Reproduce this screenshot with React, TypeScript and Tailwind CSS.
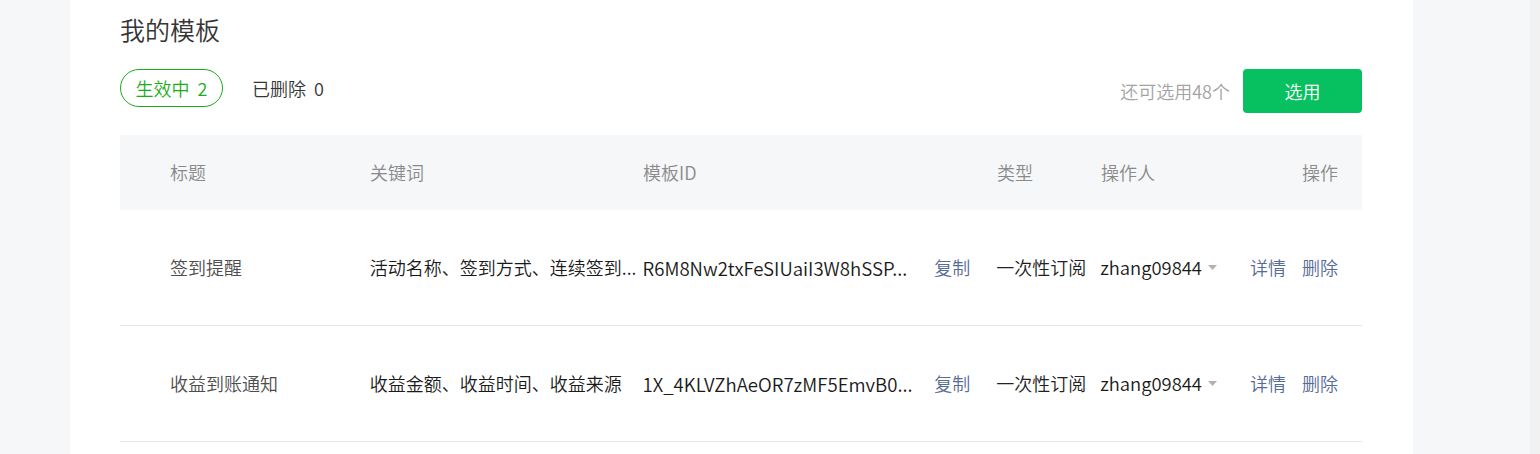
import React from "react";

const rows = [
  {
    title: "签到提醒",
    keywords: "活动名称、签到方式、连续签到...",
    id: "R6M8Nw2txFeSIUaiI3W8hSSP...",
    type: "一次性订阅",
    op: "zhang09844",
  },
  {
    title: "收益到账通知",
    keywords: "收益金额、收益时间、收益来源",
    id: "1X_4KLVZhAeOR7zMF5EmvB0...",
    type: "一次性订阅",
    op: "zhang09844",
  },
];

export default function App() {
  return (
    <div className="flex min-h-[454px] bg-[#f6f7f9] font-['Noto_Sans_CJK_SC',sans-serif] font-[350]">
      <div className="w-[70px] shrink-0" />
      <div className="w-[1343px] shrink-0 bg-white pl-[50px] pr-[51px] pt-[13px]">
        <h2 className="text-[25px] leading-[32px] text-[#353535]">我的模板</h2>
        <div className="mt-[24px] flex items-start justify-between">
          <div className="flex items-center">
            <span className="flex h-[38px] w-[103px] items-center justify-center rounded-full border border-[#1aad19] text-[18px] text-[#1aad19]">
              生效中<span className="ml-[8px]">2</span>
            </span>
            <span className="ml-[29px] flex text-[18px] text-[#353535]">
              已删除<span className="ml-[8px]">0</span>
            </span>
          </div>
          <div className="flex items-center gap-[13px]">
            <span className="text-[18px] text-[#a3a3a3]">还可选用48个</span>
            <button className="flex h-[44px] w-[119px] items-center justify-center rounded-[4px] bg-[#07c160] text-[18px] text-white">
              选用
            </button>
          </div>
        </div>

        <div className="mt-[22px]">
          <div className="flex h-[75px] items-center bg-[#f6f7f9] text-[18px] text-[#8a8a8a]">
            <div className="w-[250px] pl-[50px]">标题</div>
            <div className="w-[273px]">关键词</div>
            <div className="w-[354px]">模板ID</div>
            <div className="w-[104px]">类型</div>
            <div className="w-[150px]">操作人</div>
            <div className="flex flex-1 justify-end pr-[24px]">操作</div>
          </div>
          {rows.map((r) => (
            <div
              key={r.id}
              className="flex h-[116px] items-center whitespace-nowrap border-b border-[#e6e6e6] text-[18px]"
            >
              <div className="w-[250px] pl-[50px] text-[#4d4d4d]">{r.title}</div>
              <div className="w-[273px] text-[#1a1a1a]">{r.keywords}</div>
              <div className="w-[292px] text-[18.6px] text-[#1a1a1a]">{r.id}</div>
              <div className="w-[62px] text-[#576b95]">复制</div>
              <div className="w-[104px] text-[#222]">{r.type}</div>
              <div className="flex w-[150px] items-center">
                <span className="text-[18.4px] text-[#1a1a1a]">{r.op}</span>
                <svg className="ml-[6px]" width="9" height="5" viewBox="0 0 9 5">
                  <path d="M0 0 L9 0 L4.5 5 Z" fill="#b2b2b2" />
                </svg>
              </div>
              <div className="flex flex-1 justify-end gap-[16px] pr-[24px] text-[#576b95]">
                <span>详情</span>
                <span>删除</span>
              </div>
            </div>
          ))}
        </div>
      </div>
      <div className="flex-1" />
      <div className="w-[10px] shrink-0 bg-[#f1f1f1]" />
    </div>
  );
}
